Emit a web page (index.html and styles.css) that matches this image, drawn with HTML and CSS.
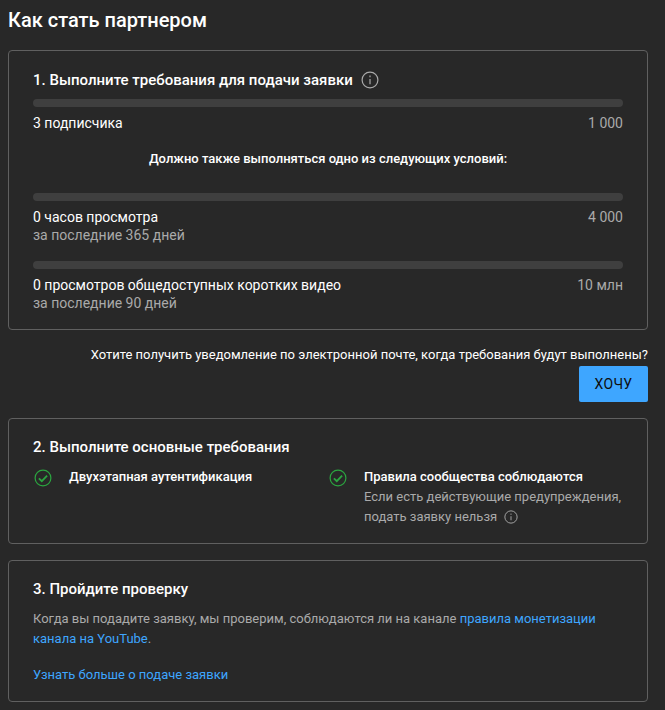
FILE: index.html
```html
<!DOCTYPE html>
<html lang="ru">
<head>
  <meta charset="UTF-8" />
  <title>Как стать партнером</title>
  <link rel="stylesheet" href="styles.css">
</head>
<body>
  <h1 class="page-title">Как стать партнером</h1>

  <section class="card card-first">
    <h2 class="card-title">1. Выполните требования для подачи заявки
      <svg class="info info-big" viewBox="0 0 18 18"><circle cx="9" cy="9" r="7.9"/><path d="M9 8v5.2M9 4.6v1.6"/></svg>
    </h2>

    <div class="progress"></div>
    <div class="metric">
      <div class="metric-name">3 подписчика</div>
      <div class="metric-goal">1 000</div>
    </div>

    <p class="condition">Должно также выполняться одно из следующих условий:</p>

    <div class="progress"></div>
    <div class="metric">
      <div>
        <div class="metric-name">0 часов просмотра</div>
        <div class="metric-sub">за последние 365 дней</div>
      </div>
      <div class="metric-goal">4 000</div>
    </div>

    <div class="progress progress-next"></div>
    <div class="metric">
      <div>
        <div class="metric-name">0 просмотров общедоступных коротких видео</div>
        <div class="metric-sub">за последние 90 дней</div>
      </div>
      <div class="metric-goal">10 млн</div>
    </div>
  </section>

  <div class="notify">
    <p class="notify-text">Хотите получить уведомление по электронной почте, когда требования будут выполнены?</p>
    <button class="notify-btn">ХОЧУ</button>
  </div>

  <section class="card card-second">
    <h2 class="card-title">2. Выполните основные требования</h2>
    <div class="checks">
      <div class="check">
        <svg class="check-icon" viewBox="0 0 18 18"><circle cx="9" cy="9" r="7.9"/><path class="check-mark" d="M4.9 9.3l2.9 2.9 5.3-5.6"/></svg>
        <div class="check-title">Двухэтапная аутентификация</div>
      </div>
      <div class="check">
        <svg class="check-icon" viewBox="0 0 18 18"><circle cx="9" cy="9" r="7.9"/><path class="check-mark" d="M4.9 9.3l2.9 2.9 5.3-5.6"/></svg>
        <div>
          <div class="check-title">Правила сообщества соблюдаются</div>
          <div class="check-text">Если есть действующие предупреждения, подать заявку нельзя
            <svg class="info info-small" viewBox="0 0 18 18"><circle cx="9" cy="9" r="7.9"/><path d="M9 8v5.2M9 4.6v1.6"/></svg>
          </div>
        </div>
      </div>
    </div>
  </section>

  <section class="card card-third">
    <h2 class="card-title">3. Пройдите проверку</h2>
    <p class="review-text">Когда вы подадите заявку, мы проверим, соблюдаются ли на канале <a href="#">правила монетизации канала на YouTube</a>.</p>
    <a class="more-link" href="#">Узнать больше о подаче заявки</a>
  </section>
</body>
</html>
```

FILE: styles.css
```css
:root {
  --bg: #282828;
  --text: #fff;
  --muted: #aaa;
  --line: #606060;
  --track: #3f3f3f;
  --blue: #3ea6ff;
  --green: #2ba640;
}

* {
  box-sizing: border-box;
}

body {
  margin: 0;
  padding: 0 17px 8px 8px;
  font-family: Roboto, sans-serif;
  background-color: var(--bg);
  color: var(--text);
  overflow: hidden;
}

.page-title {
  margin: 0;
  padding-top: 6px;
  height: 50px;
  font-size: 20px;
  line-height: 28px;
  font-weight: 500;
}

.card {
  border: 1px solid var(--line);
  border-radius: 4px;
  padding: 18px 24px 0;
}

.card-first { height: 280px; padding-top: 19px; }
.card-second { height: 126px; margin-top: 16px; }
.card-third { height: 142px; margin-top: 16px; }

.card-title {
  display: flex;
  align-items: center;
  margin: 0;
  font-size: 15px;
  line-height: 20px;
  font-weight: 500;
}

.info {
  fill: none;
  stroke: #aaa;
  stroke-width: 1.2;
}

.info-big {
  width: 18px;
  height: 18px;
  margin-left: 8px;
}

.info-small {
  width: 14px;
  height: 14px;
  margin-left: 4px;
  vertical-align: -3px;
}

.progress {
  height: 8px;
  margin-top: 9px;
  border-radius: 4px;
  background: var(--track);
}

.progress-next { margin-top: 18px; }

.metric {
  display: flex;
  justify-content: space-between;
  margin-top: 6px;
  font-size: 14px;
  line-height: 20px;
}

.metric-sub, .metric-goal {
  color: var(--muted);
}

.metric-sub { line-height: 16px; }

.condition {
  margin: 17px 0 25px;
  text-align: center;
  font-size: 13px;
  line-height: 18px;
  font-weight: 500;
}

.notify {
  display: flex;
  flex-direction: column;
  align-items: flex-end;
  margin-top: 16px;
}

.notify-text {
  margin: 0;
  font-size: 13px;
  line-height: 18px;
}

.notify-btn {
  width: 69px;
  height: 36px;
  margin-top: 2px;
  border: none;
  border-radius: 2px;
  background: var(--blue);
  color: #0d0d0d;
  font-family: Roboto, sans-serif;
  font-size: 14px;
  letter-spacing: 0.3px;
}

.checks {
  display: grid;
  grid-template-columns: 295px 1fr;
  margin-top: 11px;
}

.check {
  display: flex;
  gap: 17px;
}

.check-icon {
  flex: none;
  width: 18px;
  height: 18px;
  margin: 1px 0 0 1px;
  fill: none;
  stroke: var(--green);
  stroke-width: 1.2;
}

.check-mark {
  stroke-width: 1.8;
}

.check-title {
  font-size: 13px;
  line-height: 18px;
  font-weight: 500;
}

.check-text {
  margin-top: 1px;
  font-size: 13px;
  line-height: 20px;
  color: var(--muted);
}

.review-text {
  margin: 10px 0 0;
  font-size: 13px;
  line-height: 20px;
  color: var(--muted);
}

a {
  color: var(--blue);
  text-decoration: none;
}

.more-link {
  display: block;
  margin-top: 16px;
  font-size: 13px;
  line-height: 20px;
}
```
